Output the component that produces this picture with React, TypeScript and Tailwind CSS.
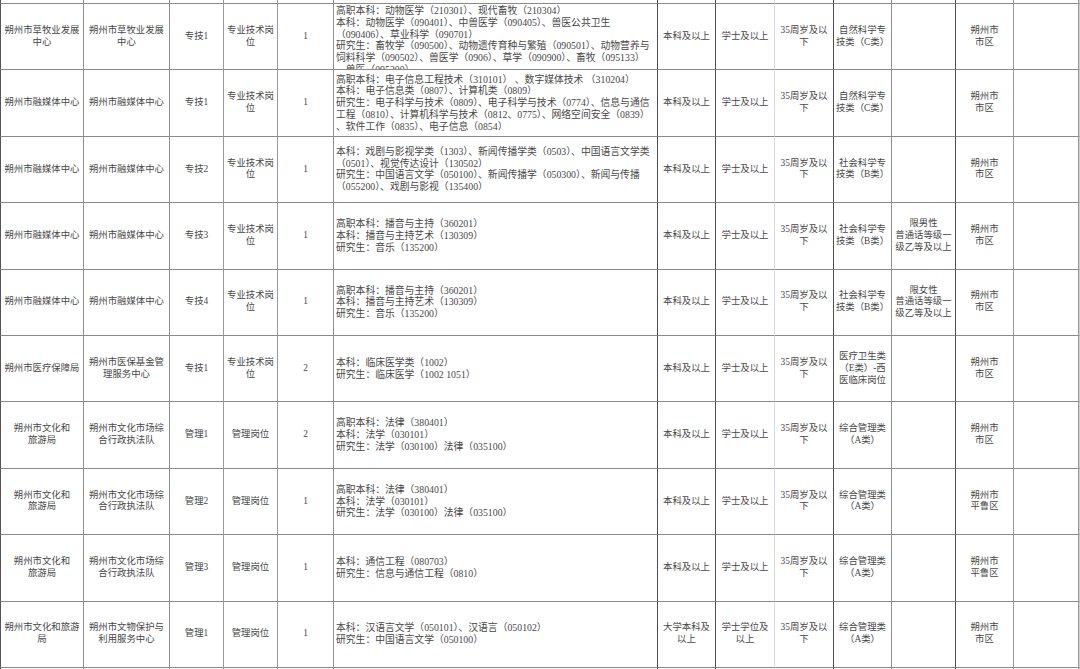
type Row = {
  org: string[];
  unit: string[];
  code: string;
  kind: string[];
  num: string;
  major: string[];
  edu: string[];
  degree: string[];
  age: string[];
  cat: string[];
  other: string[];
  place: string[];
  top?: boolean;
};

const techPost = ['专业技术岗', '位'];
const age35 = ['35周岁及以', '下'];
const cityArea = ['朔州市', '市区'];
const pinglu = ['朔州市', '平鲁区'];
const rongmei = ['朔州市融媒体中心'];
const wenlv = ['朔州市文化和', '旅游局'];
const zhifa = ['朔州市文化市场综', '合行政执法队'];
const boyin = ['高职本科：播音与主持（360201）', '本科：播音与主持艺术（130309）', '研究生：音乐（135200）'];
const falv = ['高职本科：法律（380401）', '本科：法学（030101）', '研究生：法学（030100）法律（035100）'];

const rows: Row[] = [
  {
    org: ['朔州市草牧业发展', '中心'],
    unit: ['朔州市草牧业发展', '中心'],
    code: '专技1',
    kind: techPost,
    num: '1',
    major: [
      '高职本科：动物医学（210301）、现代畜牧（210304）',
      '本科：动物医学（090401）、中兽医学（090405）、兽医公共卫生',
      '（090406）、草业科学（090701）',
      '研究生：畜牧学（090500）、动物遗传育种与繁殖（090501）、动物营养与',
      '饲料科学（090502）、兽医学（0906）、草学（090900）、畜牧（095133）',
      '、兽医（095200）',
    ],
    edu: ['本科及以上'],
    degree: ['学士及以上'],
    age: age35,
    cat: ['自然科学专', '技类（C类）'],
    other: [],
    place: cityArea,
    top: true,
  },
  {
    org: rongmei,
    unit: rongmei,
    code: '专技1',
    kind: techPost,
    num: '1',
    major: [
      '高职本科：电子信息工程技术（310101） 、数字媒体技术 （310204）',
      '本科：电子信息类（0807）、计算机类（0809）',
      '研究生：电子科学与技术（0809）、电子科学与技术（0774）、信息与通信',
      '工程（0810）、计算机科学与技术（0812、0775）、网络空间安全（0839）',
      '、软件工作（0835）、电子信息（0854）',
    ],
    edu: ['本科及以上'],
    degree: ['学士及以上'],
    age: age35,
    cat: ['自然科学专', '技类（C类）'],
    other: [],
    place: cityArea,
  },
  {
    org: rongmei,
    unit: rongmei,
    code: '专技2',
    kind: techPost,
    num: '1',
    major: [
      '本科：戏剧与影视学类（1303）、新闻传播学类（0503）、中国语言文学类',
      '（0501）、视觉传达设计（130502）',
      '研究生：中国语言文学（050100）、新闻传播学（050300）、新闻与传播',
      '（055200）、戏剧与影视（135400）',
    ],
    edu: ['本科及以上'],
    degree: ['学士及以上'],
    age: age35,
    cat: ['社会科学专', '技类（B类）'],
    other: [],
    place: cityArea,
  },
  {
    org: rongmei,
    unit: rongmei,
    code: '专技3',
    kind: techPost,
    num: '1',
    major: boyin,
    edu: ['本科及以上'],
    degree: ['学士及以上'],
    age: age35,
    cat: ['社会科学专', '技类（B类）'],
    other: ['限男性', '普通话等级一', '级乙等及以上'],
    place: cityArea,
  },
  {
    org: rongmei,
    unit: rongmei,
    code: '专技4',
    kind: techPost,
    num: '1',
    major: boyin,
    edu: ['本科及以上'],
    degree: ['学士及以上'],
    age: age35,
    cat: ['社会科学专', '技类（B类）'],
    other: ['限女性', '普通话等级一', '级乙等及以上'],
    place: cityArea,
  },
  {
    org: ['朔州市医疗保障局'],
    unit: ['朔州市医保基金管', '理服务中心'],
    code: '专技1',
    kind: techPost,
    num: '2',
    major: ['本科：临床医学类（1002）', '研究生：临床医学（1002 1051）'],
    edu: ['本科及以上'],
    degree: ['学士及以上'],
    age: age35,
    cat: ['医疗卫生类', '（E类）-西', '医临床岗位'],
    other: [],
    place: cityArea,
  },
  {
    org: wenlv,
    unit: zhifa,
    code: '管理1',
    kind: ['管理岗位'],
    num: '2',
    major: falv,
    edu: ['本科及以上'],
    degree: ['学士及以上'],
    age: age35,
    cat: ['综合管理类', '（A类）'],
    other: [],
    place: cityArea,
  },
  {
    org: wenlv,
    unit: zhifa,
    code: '管理2',
    kind: ['管理岗位'],
    num: '1',
    major: falv,
    edu: ['本科及以上'],
    degree: ['学士及以上'],
    age: age35,
    cat: ['综合管理类', '（A类）'],
    other: [],
    place: pinglu,
  },
  {
    org: wenlv,
    unit: zhifa,
    code: '管理3',
    kind: ['管理岗位'],
    num: '1',
    major: ['本科：通信工程（080703）', '研究生：信息与通信工程（0810）'],
    edu: ['本科及以上'],
    degree: ['学士及以上'],
    age: age35,
    cat: ['综合管理类', '（A类）'],
    other: [],
    place: pinglu,
  },
  {
    org: ['朔州市文化和旅游', '局'],
    unit: ['朔州市文物保护与', '利用服务中心'],
    code: '管理1',
    kind: ['管理岗位'],
    num: '1',
    major: ['本科：汉语言文学（050101）、汉语言（050102）', '研究生：中国语言文学（050100）'],
    edu: ['大学本科及', '以上'],
    degree: ['学士学位及', '以上'],
    age: age35,
    cat: ['综合管理类', '（A类）'],
    other: [],
    place: cityArea,
  },
];

// right-hand border of each column; the first one also carries the outer left edge
const colBorder = [
  'border-l border-l-[#555] border-r-[#8e8e8e]',
  'border-r-[#8e8e8e]',
  'border-r-[#9a9a9a]',
  'border-r-[#9a9a9a]',
  'border-r-[#8e8e8e]',
  'border-r-[#505050]',
  'border-r-[#505050]',
  'border-r-[#dadada]',
  'border-r-[#505050]',
  'border-r-[#8e8e8e]',
  'border-r-[#505050]',
  'border-r-[#999]',
  'border-r-[#999]',
  'border-r-[#d0d0d0]',
];

const cellBase = 'border-r border-b border-b-[#8a8a8a] overflow-hidden';

function Cell({ col, lines, left, top }: { col: number; lines: string[]; left?: boolean; top?: boolean }) {
  return (
    <div
      className={`${cellBase} ${colBorder[col]} flex flex-col ${top ? 'justify-start pt-px' : 'justify-center'} ${
        left ? 'items-start pl-[2px] text-[9.8px]' : 'items-center text-center'
      }`}
    >
      {lines.map((l, i) => (
        <div key={i} className="whitespace-nowrap">
          {l}
        </div>
      ))}
    </div>
  );
}

function EmptyRow({ h }: { h: string }) {
  return (
    <>
      {colBorder.map((b, i) => (
        <div key={i} className={`${cellBase} ${b} ${h}`} />
      ))}
    </>
  );
}

export default function App() {
  return (
    <div className="w-[1080px] h-[669px] overflow-hidden bg-white">
      <div
        className="grid grid-cols-[84px_86px_54px_54px_56px_324px_58px_59px_59px_58px_64px_58px_65px_1fr] text-[9.4px] leading-[11.8px] text-[#474747]"
        style={{ fontFamily: '"Liberation Serif", "Noto Sans CJK SC", serif' }}
      >
        <EmptyRow h="h-[4px]" />
        {rows.map((r, ri) => {
          const cells = [
            r.org,
            r.unit,
            [r.code],
            r.kind,
            [r.num],
            r.major,
            r.edu,
            r.degree,
            r.age,
            r.cat,
            r.other,
            r.place,
            [],
            [],
          ];
          return (
            <div key={ri} className="contents">
              {cells.map((lines, ci) => (
                <div key={ci} className="h-[66.4px] grid">
                  <Cell col={ci} lines={lines} left={ci === 5} top={ci === 5 && r.top} />
                </div>
              ))}
            </div>
          );
        })}
        <EmptyRow h="h-[20px]" />
      </div>
    </div>
  );
}
